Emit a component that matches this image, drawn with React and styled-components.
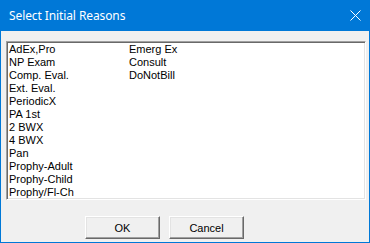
import React from "react";
import styled, { createGlobalStyle } from "styled-components";

const Global = createGlobalStyle`
  html, body { margin: 0; padding: 0; background: #ffffff; }
  * { box-sizing: border-box; }
`;

const Window = styled.div`
  width: 370px;
  height: 243px;
  display: flex;
  flex-direction: column;
  border: 1px solid #0078d7;
  border-top: none;
  background: #f0f0f0;
  overflow: hidden;
`;

const TitleBar = styled.div`
  height: 31px;
  flex: none;
  margin: 0 -1px;
  background: #0078d7;
  display: flex;
  align-items: center;
  justify-content: space-between;
  padding: 0 9px 1px 9px;
  color: #ffffff;
  font-family: "Noto Sans", "Segoe UI", sans-serif;
  font-size: 12px;
`;

const Title = styled.span`
  letter-spacing: -0.1px;
`;

const CloseIcon = styled.svg`
  width: 11px;
  height: 11px;
  margin-right: 0px;
  margin-top: 1px;
`;

const Client = styled.div`
  flex: 1;
  display: flex;
  flex-direction: column;
  padding: 10px 3px 0 5px;
`;

const ListBox = styled.div`
  height: 159px;
  background: #ffffff;
  border: 1px solid;
  border-color: #a0a0a0 #ffffff #ffffff #a0a0a0;
  box-shadow: inset 1px 1px 0 #696969, inset -1px -1px 0 #e3e3e3;
  padding: 1px 1px 1px 2px;
  overflow: hidden;
`;

const Columns = styled.div`
  display: grid;
  grid-auto-flow: column;
  grid-template-rows: repeat(12, 13px);
  grid-auto-columns: 120px;
  font-family: "Liberation Sans", Arial, sans-serif;
  font-size: 11px;
  line-height: 13px;
  color: #000000;
`;

const Item = styled.div`
  white-space: nowrap;
  padding-left: 0;
`;

const Footer = styled.div`
  display: flex;
  gap: 9px;
  margin-top: 16px;
  padding-left: 79px;
`;

const Button = styled.button`
  width: 75px;
  height: 23px;
  padding: 0;
  background: #f0f0f0;
  border: 1px solid;
  border-color: #ffffff #696969 #696969 #ffffff;
  box-shadow: inset -1px -1px 0 #a0a0a0, inset 1px 1px 0 #e3e3e3;
  font-family: "Liberation Sans", Arial, sans-serif;
  font-size: 11px;
  color: #000000;
  display: flex;
  align-items: center;
  justify-content: center;
`;

const items = [
  "AdEx,Pro",
  "NP Exam",
  "Comp. Eval.",
  "Ext. Eval.",
  "PeriodicX",
  "PA 1st",
  "2 BWX",
  "4 BWX",
  "Pan",
  "Prophy-Adult",
  "Prophy-Child",
  "Prophy/Fl-Ch",
  "Emerg Ex",
  "Consult",
  "DoNotBill",
];

export default function App() {
  return (
    <>
      <Global />
      <Window>
        <TitleBar>
          <Title>Select Initial Reasons</Title>
          <CloseIcon viewBox="0 0 11 11">
            <path d="M0.5 0.5 L10.5 10.5 M10.5 0.5 L0.5 10.5" stroke="#ffffff" strokeWidth="1" fill="none" />
          </CloseIcon>
        </TitleBar>
        <Client>
          <ListBox>
            <Columns>
              {items.map((t) => (
                <Item key={t}>{t}</Item>
              ))}
            </Columns>
          </ListBox>
          <Footer>
            <Button>OK</Button>
            <Button>Cancel</Button>
          </Footer>
        </Client>
      </Window>
    </>
  );
}
